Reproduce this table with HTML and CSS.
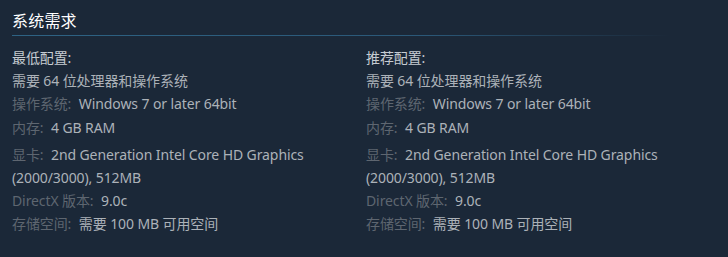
FILE: index.html
```html
<!DOCTYPE html>
<html lang="zh-CN">
<head>
<meta charset="utf-8">
<link rel="stylesheet" href="styles.css">
</head>
<body>
<div class="sysreq">
  <h2 class="title">系统需求</h2>
  <div class="cols">
    <div class="col">
      <div class="head">最低配置:</div>
      <ul class="list">
        <li>需要 64 位处理器和操作系统</li>
        <li class="r2"><span class="lbl">操作系统:</span> <span class="val">Windows 7 or later 64bit</span></li>
        <li class="r3"><span class="lbl">内存:</span> <span class="val">4 GB RAM</span></li>
        <li class="r4"><span class="lbl">显卡:</span> <span class="val">2nd Generation Intel Core HD Graphics (2000/3000), 512MB</span></li>
        <li><span class="lbl">DirectX 版本:</span> <span class="val">9.0c</span></li>
        <li><span class="lbl">存储空间:</span> <span class="val">需要 100 MB 可用空间</span></li>
      </ul>
    </div>
    <div class="col">
      <div class="head">推荐配置:</div>
      <ul class="list">
        <li>需要 64 位处理器和操作系统</li>
        <li class="r2"><span class="lbl">操作系统:</span> <span class="val">Windows 7 or later 64bit</span></li>
        <li class="r3"><span class="lbl">内存:</span> <span class="val">4 GB RAM</span></li>
        <li class="r4"><span class="lbl">显卡:</span> <span class="val">2nd Generation Intel Core HD Graphics (2000/3000), 512MB</span></li>
        <li><span class="lbl">DirectX 版本:</span> <span class="val">9.0c</span></li>
        <li><span class="lbl">存储空间:</span> <span class="val">需要 100 MB 可用空间</span></li>
      </ul>
    </div>
  </div>
</div>
</body>
</html>
```
FILE: styles.css
```css
html, body {
  margin: 0;
  padding: 0;
  background: #1b2838;
}
body {
  width: 728px;
  height: 257px;
  overflow: hidden;
  font-family: "Noto Sans", "Noto Sans CJK SC", sans-serif;
  font-size: 14px;
  letter-spacing: -0.1px;
  color: #acb2b8;
}
.sysreq {
  padding: 0 0 0 12px;
}
.title {
  margin: 0;
  padding-top: 10px;
  height: 25px;
  font-size: 16px;
  line-height: 22px;
  font-weight: normal;
  letter-spacing: 0.2px;
  color: #ffffff;
  border-bottom: 1px solid transparent;
  border-image: linear-gradient(to right, #2e6384 0%, #2b5878 60%, rgba(43, 88, 120, 0) 95%) 1;
  width: 692px;
}
.cols {
  display: grid;
  grid-template-columns: 354px 354px;
  padding-top: 11px;
}
.col {
  padding-right: 14px;
}
.head {
  line-height: 22px;
  color: #c6ccd2;
}
.list {
  list-style: none;
  margin: 0;
  padding: 0;
}
.list li {
  line-height: 23px;
}
.list li.r3 { margin-top: 1px; }
.list li.r4 { margin-top: 4px; }
.lbl {
  color: #5e6670;
  margin-right: 4px;
}
.val {
  color: #acb2b8;
}
```
